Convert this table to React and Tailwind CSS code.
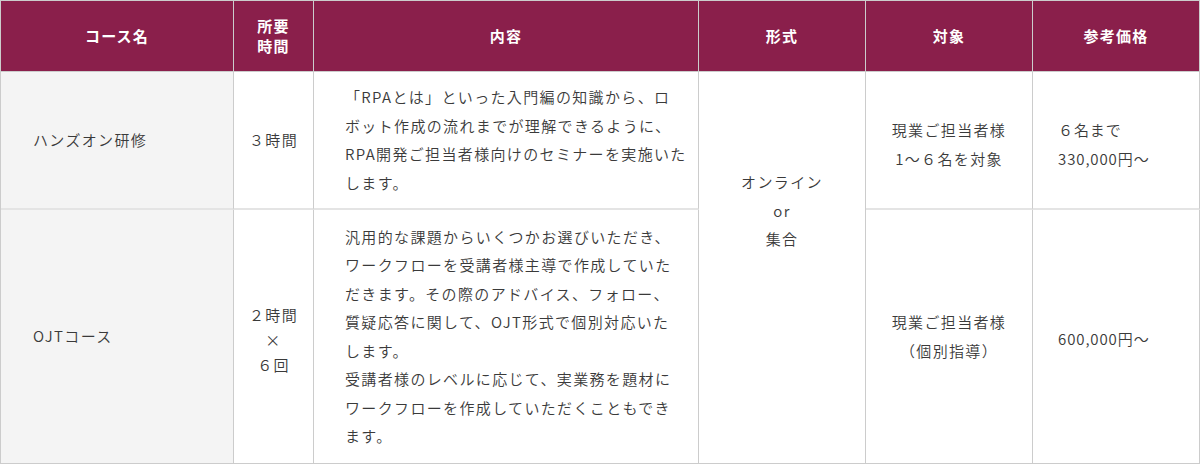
import React from "react";

const head = "bg-[#8a1f4b] text-white font-bold text-[15px] tracking-[0.08em] flex items-center justify-center text-center border-r border-b border-[#ccc]";
const top = "border-r border-[#ccc] border-b-2 border-b-[#e4e4e4]";
const bottom = "border-r border-b border-[#ccc]";

const intro = [
  "「RPAとは」といった入門編の知識から、ロ",
  "ボット作成の流れまでが理解できるように、",
  "RPA開発ご担当者様向けのセミナーを実施いた",
  "します。",
];

const ojt = [
  "汎用的な課題からいくつかお選びいただき、",
  "ワークフローを受講者様主導で作成していた",
  "だきます。その際のアドバイス、フォロー、",
  "質疑応答に関して、OJT形式で個別対応いた",
  "します。",
  "受講者様のレベルに応じて、実業務を題材に",
  "ワークフローを作成していただくこともでき",
  "ます。",
];

const Lines = ({ items }) => (
  <div className="whitespace-nowrap">
    {items.map((l, i) => (
      <div key={i}>{l}</div>
    ))}
  </div>
);

export default function App() {
  return (
    <div className="w-[1200px] h-[464px] bg-white font-['Noto_Sans_CJK_JP','Noto_Sans',sans-serif] text-[15px] font-[350] tracking-[0.09em] text-[#3a3a3a] leading-[1.9]">
      <div className="grid w-[1200px] grid-cols-[233px_80px_385px_167px_167px_167px] grid-rows-[71px_138px_254px] border-t border-l border-[#ccc]">
        <div className={head}>コース名</div>
        <div className={`${head} leading-[20px]`}>所要<br />時間</div>
        <div className={head}>内容</div>
        <div className={head}>形式</div>
        <div className={head}>対象</div>
        <div className={head}>参考価格</div>

        <div className={`${top} bg-[#f4f4f4] flex items-center pl-[32px]`}>ハンズオン研修</div>
        <div className={`${top} flex items-center justify-center`}>３時間</div>
        <div className={`${top} flex items-center pl-[31px]`}>
          <Lines items={intro} />
        </div>
        <div className={`${bottom} row-span-2 flex flex-col items-center pt-[96px] leading-[28.5px] text-center`}>
          <div>オンライン</div>
          <div>or</div>
          <div>集合</div>
        </div>
        <div className={`${top} flex flex-col items-center justify-center pt-[9px] text-center`}>
          <div>現業ご担当者様</div>
          <div>1〜６名を対象</div>
        </div>
        <div className={`${top} flex flex-col justify-center pt-[9px] pl-[25px] tracking-[0.06em]`}>
          <div>６名まで</div>
          <div>330,000円〜</div>
        </div>

        <div className={`${bottom} bg-[#f4f4f4] flex items-center pl-[32px]`}>OJTコース</div>
        <div className={`${bottom} flex flex-col items-center justify-center leading-[25px] pt-[6px] text-center`}>
          <div>２時間</div>
          <div>×</div>
          <div>６回</div>
        </div>
        <div className={`${bottom} flex items-center pl-[31px]`}>
          <Lines items={ojt} />
        </div>
        <div className={`${bottom} flex flex-col items-center justify-center text-center`}>
          <div>現業ご担当者様</div>
          <div>（個別指導）</div>
        </div>
        <div className={`${bottom} flex items-center pl-[25px] pt-[6px] tracking-[0.06em]`}>600,000円〜</div>
      </div>
    </div>
  );
}
